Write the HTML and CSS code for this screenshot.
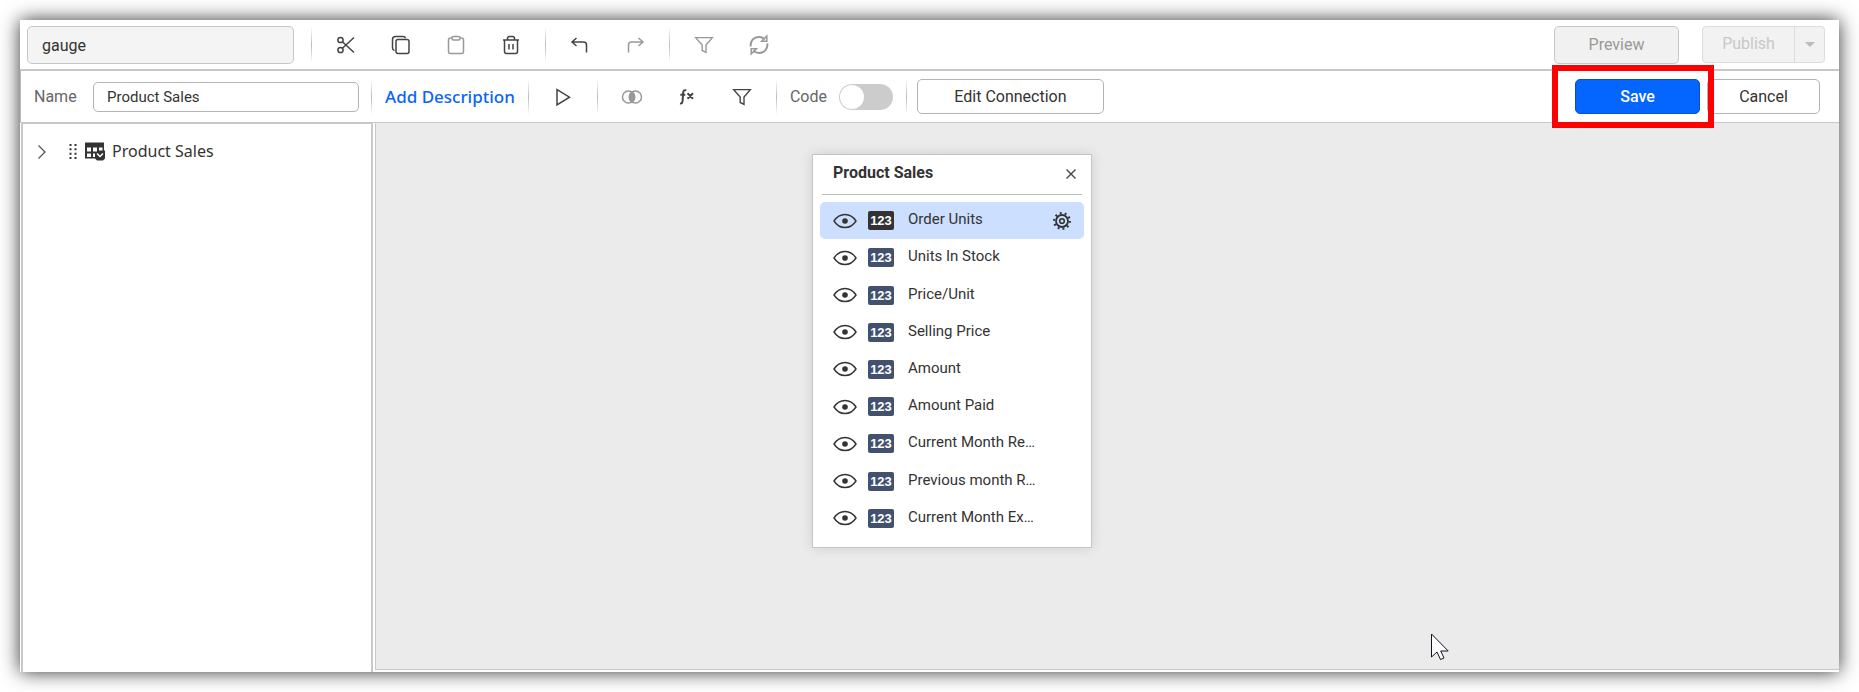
FILE: index.html
```html
<!DOCTYPE html>
<html lang="en">
<head>
<meta charset="utf-8">
<title>gauge</title>
<link rel="stylesheet" href="styles.css">
</head>
<body>
<svg class="defs" width="0" height="0" aria-hidden="true">
  <symbol id="eye" viewBox="0 0 24 16"><path d="M1 8C4 3.400 7.500 1.500 12 1.500S20 3.400 23 8C20 12.600 16.500 14.500 12 14.500S4 12.600 1 8Z" fill="none" stroke="currentColor" stroke-width="1.400"/><circle cx="12" cy="8" r="2.800" fill="currentColor"/></symbol>
  <symbol id="funnel" viewBox="0 0 24 24"><path d="M3.700 4.600h16.600L14 12v7.400l-3.800-1.900V12Z" fill="none" stroke="currentColor" stroke-width="1.400"/></symbol>
</svg>
<div class="app">
  <header class="bar">
    <input class="field field-title" aria-label="Dashboard name" value="gauge" readonly>
    <div class="tools">
      <button class="tool" aria-label="Cut"><svg viewBox="0 0 24 24"><circle cx="6.500" cy="7" r="2.600"/><circle cx="6.500" cy="17" r="2.600"/><path d="M8.400 8.800 20 19.500M8.400 15.200 20 4.500"/></svg></button>
      <button class="tool" aria-label="Copy"><svg viewBox="0 0 24 24"><path d="M5.500 17.500c-1.200-.3-2-1-2-2.500V6.500c0-2 1-3 3-3H14c1.300 0 2.200.6 2.500 1.700"/><rect x="7" y="6.500" width="13" height="14" rx="2"/></svg></button>
      <button class="tool" aria-label="Paste" disabled><svg viewBox="0 0 24 24"><path d="M8 5H6.500a2 2 0 0 0-2 2v11.500a2 2 0 0 0 2 2h11a2 2 0 0 0 2-2V7a2 2 0 0 0-2-2H16"/><rect x="8" y="3.500" width="8" height="3.500" rx="1.500"/></svg></button>
      <button class="tool" aria-label="Delete"><svg viewBox="0 0 24 24"><path d="M4 7h16M5.500 7v11.500a2 2 0 0 0 2 2h9a2 2 0 0 0 2-2V7M8.500 7V5.500a2 2 0 0 1 2-2h3a2 2 0 0 1 2 2V7M10 11v5.500M14 11v5.500"/></svg></button>
    </div>
    <div class="tools">
      <button class="tool" aria-label="Undo"><svg viewBox="0 0 24 24"><path d="M8.500 5 4 9l4.500 4M4 9h11.500a3 3 0 0 1 3 3v7.500"/></svg></button>
      <button class="tool" aria-label="Redo" disabled><svg viewBox="0 0 24 24"><path d="M15.500 5 20 9l-4.500 4M20 9H8.500a3 3 0 0 0-3 3v7.500"/></svg></button>
    </div>
    <div class="tools">
      <button class="tool" aria-label="Filter" disabled><svg><use href="#funnel"/></svg></button>
      <button class="tool" aria-label="Refresh" disabled><svg viewBox="0 0 24 24"><path class="bold" d="M3.700 13.500C3 8 6.800 4 12 4c2.300 0 4.300.9 5.800 2.400M20.300 10.500C21 16 17.200 20 12 20c-2.300 0-4.300-.9-5.800-2.400"/><path d="M19.800 3v5.200h-5.200ZM4.200 21v-5.200h5.200Z"/></svg></button>
    </div>
    <div class="actions actions-top">
      <button class="btn btn-preview" disabled>Preview</button>
      <div class="split">
        <button class="split-main" disabled>Publish</button>
        <button class="split-more" aria-label="Publish options" disabled><span class="caret"></span></button>
      </div>
    </div>
  </header>

  <div class="bar bar-source">
    <label class="label label-name" for="source">Name</label>
    <input class="field field-source" id="source" value="Product Sales">
    <div class="section"><a class="describe" href="#">Add Description</a></div>
    <div class="tools">
      <button class="tool" aria-label="Run"><svg viewBox="0 0 24 24"><path d="M6 4.500v15.500L18.500 12.200Z"/></svg></button>
    </div>
    <div class="tools">
      <button class="tool tool-grey" aria-label="Join"><svg viewBox="0 0 24 24"><circle cx="8.500" cy="12" r="6"/><circle cx="15.500" cy="12" r="6"/><path d="M12 7a6 6 0 0 1 0 10 6 6 0 0 1 0-10Z" fill="currentColor"/></svg></button>
      <button class="tool" aria-label="Expression"><svg viewBox="0 0 24 24"><path class="bold" d="M11.300 5.300c-2.300-.5-3 .2-3.200 2.500l-.5 8c-.1 2.200-.8 2.900-2.600 2.600M5.300 9.800h5M12.500 8.300l5.500 5.400M18 8.300l-5.500 5.400"/></svg></button>
      <button class="tool" aria-label="Filter rows"><svg><use href="#funnel"/></svg></button>
    </div>
    <div class="section section-code">
      <label class="label" for="code">Code</label>
      <input class="switch" id="code" type="checkbox" role="switch">
    </div>
    <div class="section section-edit"><button class="btn btn-edit">Edit Connection</button></div>
    <div class="actions">
      <div class="callout"><button class="btn btn-save">Save</button></div>
      <button class="btn btn-cancel">Cancel</button>
    </div>
  </div>

  <main class="work">
    <aside class="tree">
      <button class="twist" aria-label="Expand"><svg width="10" height="16" viewBox="0 0 10 16"><path d="M1.500 1.500 8 8l-6.500 6.500" fill="none" stroke="currentColor" stroke-width="1.300"/></svg></button>
      <svg class="grip" width="8" height="18" viewBox="0 0 8 18"><path d="M1.500 2v15M6.500 2v15" stroke="currentColor" stroke-width="2" stroke-dasharray="2 2.330"/></svg>
      <svg class="sheet" width="21" height="19" viewBox="0 0 21 19"><path d="M0 1h19v8h1v8l-2 2h-6l-2-2H0Z" fill="#333"/><path d="M2 6h4v4H2ZM8 6h4v4H8ZM14 6h3.500v3H14ZM2 12h4v3.500H2ZM8 12h2v3.500H8Z" fill="#fff"/><path d="m12 12 3 3 3-3" fill="none" stroke="#fff" stroke-width="1.500"/></svg>
      <span class="tree-name">Product Sales</span>
    </aside>
    <section class="canvas">
      <article class="card">
        <header class="card-head">
          <h2 class="card-title">Product Sales</h2>
          <button class="close" aria-label="Close"><svg width="12" height="12" viewBox="0 0 12 12"><path d="m1.500 1.500 9 9M10.500 1.500l-9 9" stroke="currentColor" stroke-width="1.400"/></svg></button>
        </header>
        <ul class="cols">
          <li class="col col-on"><svg class="eye"><use href="#eye"/></svg><span class="badge">123</span><span class="col-name">Order Units</span><button class="gear" aria-label="Settings"><svg width="20" height="20" viewBox="0 0 20 20" fill="none" stroke="currentColor"><circle cx="10" cy="10" r="6" stroke-width="1.800"/><circle cx="10" cy="10" r="2.300" stroke-width="1.600"/><circle cx="10" cy="10" r="7.900" stroke-width="2.200" stroke-dasharray="1.900 3.064"/></svg></button></li>
          <li class="col"><svg class="eye"><use href="#eye"/></svg><span class="badge">123</span><span class="col-name">Units In Stock</span></li>
          <li class="col"><svg class="eye"><use href="#eye"/></svg><span class="badge">123</span><span class="col-name">Price/Unit</span></li>
          <li class="col"><svg class="eye"><use href="#eye"/></svg><span class="badge">123</span><span class="col-name">Selling Price</span></li>
          <li class="col"><svg class="eye"><use href="#eye"/></svg><span class="badge">123</span><span class="col-name">Amount</span></li>
          <li class="col"><svg class="eye"><use href="#eye"/></svg><span class="badge">123</span><span class="col-name">Amount Paid</span></li>
          <li class="col"><svg class="eye"><use href="#eye"/></svg><span class="badge">123</span><span class="col-name">Current Month Re…</span></li>
          <li class="col"><svg class="eye"><use href="#eye"/></svg><span class="badge">123</span><span class="col-name">Previous month R…</span></li>
          <li class="col"><svg class="eye"><use href="#eye"/></svg><span class="badge">123</span><span class="col-name">Current Month Ex…</span></li>
        </ul>
      </article>
      <svg class="pointer" width="20" height="29" viewBox="0 0 20 29"><path d="M1.500 1v23l5.500-5 3.500 7.500 3.500-1.500-3.300-7h7.500Z" fill="#fff" stroke="#112"/></svg>
    </section>
  </main>
</div>
</body>
</html>
```
FILE: styles.css
```css
* { box-sizing: border-box; }
body {
  margin: 0;
  padding: 20px;
  min-height: 100vh;
  display: flex;
  background: #fff;
  color: #333;
  font: 15px/20px Roboto, sans-serif;
}
button, input { font: inherit; color: inherit; margin: 0; }
button { padding: 0; border: 0; background: none; }
.defs { position: absolute; }

.app {
  flex: 1;
  display: flex;
  flex-direction: column;
  background: #fff;
  box-shadow: 0 0 18px rgba(0, 0, 0, .8);
}

/* Toolbars */
.bar {
  display: flex;
  align-items: center;
  height: 51px;
  padding: 0 14px 0 7px;
  border-bottom: 2px solid #c8c8c8;
}
.bar-source {
  height: 52px;
  padding: 0 19px 0 13px;
  border-left: 1px solid #bbb;
  border-bottom: 1px solid #c8c8c8;
}
.field {
  border: 1px solid #b4b4b4;
  border-radius: 5px;
  background: #fff;
  outline: 0;
}
.field-title {
  width: 267px;
  height: 38px;
  margin-right: 17px;
  padding: 2px 14px 0;
  border-color: #c6c6c6;
  background: #f4f4f4;
  font-size: 16px;
}
.field-source {
  width: 266px;
  height: 30px;
  margin-right: 12px;
  padding: 0 13px;
}
.label { color: #666; font-size: 16px; }
.label-name { width: 59px; }

.tools, .section {
  display: flex;
  align-items: center;
  height: 34px;
  border-left: 1px solid;
  border-image: linear-gradient(#fff, #bbb 50%, #fff) 1;
}
.tools { gap: 31px; padding: 0 22px; }
.section { padding: 0 13px; }
.section-code { gap: 12px; }
.section-edit { padding: 0 10px; }
.tool { width: 24px; height: 24px; color: #444; }
.tool:disabled, .tool-grey { color: #999; }
.tool svg {
  display: block;
  width: 24px;
  height: 24px;
  fill: none;
  stroke: currentColor;
  stroke-width: 1.5;
}
.tool .bold { stroke-width: 2; }
.describe {
  color: #0b63ff;
  font: 500 17px/24px "Noto Sans", sans-serif;
  text-decoration: none;
}
.switch {
  appearance: none;
  display: flex;
  width: 54px;
  height: 26px;
  padding: 1px;
  border-radius: 13px;
  background: #ccc;
}
.switch::before {
  content: "";
  width: 24px;
  border-radius: 50%;
  background: #fff;
}
.switch:checked { justify-content: flex-end; background: #0565ff; }

/* Buttons */
.btn {
  height: 35px;
  border: 1px solid #b4b4b4;
  border-radius: 5px;
  background: #fff;
  font-size: 16px;
}
.btn-edit { width: 187px; }
.btn-cancel { width: 113px; }
.btn-save {
  width: 125px;
  border-color: #0552cc;
  background: #0565ff;
  color: #fff;
  font-weight: 500;
}
.btn-preview {
  width: 125px;
  height: 38px;
  border-color: #c8c8c8;
  background: #f1f1f1;
  color: #999;
}
.actions { display: flex; gap: 7px; margin-left: auto; }
.actions-top { gap: 23px; }
.split {
  display: flex;
  height: 37px;
  border: 1px solid #dcdcdc;
  border-radius: 4px;
  background: #f2f2f2;
  color: #c8c8c8;
  font-size: 16px;
}
.split-main { width: 91px; }
.split-more { width: 30px; border-left: 1px solid #dcdcdc; }
.caret {
  display: inline-block;
  border: 5px solid transparent;
  border-top-color: #bbb;
  border-bottom: 0;
  vertical-align: middle;
}
.callout { position: relative; z-index: 1; }
.callout::after {
  content: "";
  position: absolute;
  inset: -14px -14px -14px -23px;
  border: 6px solid #f00;
  pointer-events: none;
}

/* Work area */
.work { flex: 1; display: flex; gap: 2px; }
.tree {
  display: flex;
  align-items: flex-start;
  width: 352px;
  padding: 17px 14px;
  border: solid #c8c8c8;
  border-width: 1px 2px 0;
  margin-left: 1px;
}
.tree > * { height: 20px; }
.twist { width: 10px; color: #555; }
.twist svg { display: block; margin-top: 2px; }
.grip { margin-left: 22px; color: #333; }
.sheet { margin-left: 8px; }
.tree-name {
  margin-left: 6px;
  font: 16px/20px "Noto Sans", sans-serif;
}
.canvas {
  position: relative;
  flex: 1;
  margin-bottom: 2px;
  border: solid #c8c8c8;
  border-width: 0 0 1px 1px;
  background: #ebebeb;
}
.card {
  position: absolute;
  left: 436px;
  top: 31px;
  width: 280px;
  padding: 0 7px 10px;
  border: 1px solid #c4c4c4;
  background: #fff;
  box-shadow: 0 0 12px rgba(0, 0, 0, .12);
}
.card-head {
  display: flex;
  align-items: center;
  justify-content: space-between;
  height: 40px;
  margin: 0 2px 7px;
  padding: 0 5px 2px 11px;
  border-bottom: 1px solid #b8bdbd;
}
.card-title { margin: 0; padding-bottom: 2px; font-size: 16px; font-weight: 700; line-height: 20px; }
.close { height: 12px; color: #444; }
.close svg { display: block; }
.cols {
  display: grid;
  grid-auto-rows: 1fr;
  height: 335px;
  margin: 0;
  padding: 0;
  list-style: none;
}
.col { display: flex; align-items: center; padding: 0 12px 0 13px; border-radius: 5px; }
.col-on { background: #ccdfff; }
.eye { width: 24px; height: 16px; }
.badge {
  width: 26px;
  margin: 0 14px 0 11px;
  border-radius: 2px;
  background: #42526e;
  color: #fff;
  font: 700 13px/19px "Liberation Sans", sans-serif;
  text-align: center;
}
.col-on .badge { background: #333; }
.col-name { padding-bottom: 3px; }
.gear { height: 20px; margin-left: auto; }
.gear svg { display: block; }
.pointer { position: absolute; right: 389px; bottom: 7px; }
```
